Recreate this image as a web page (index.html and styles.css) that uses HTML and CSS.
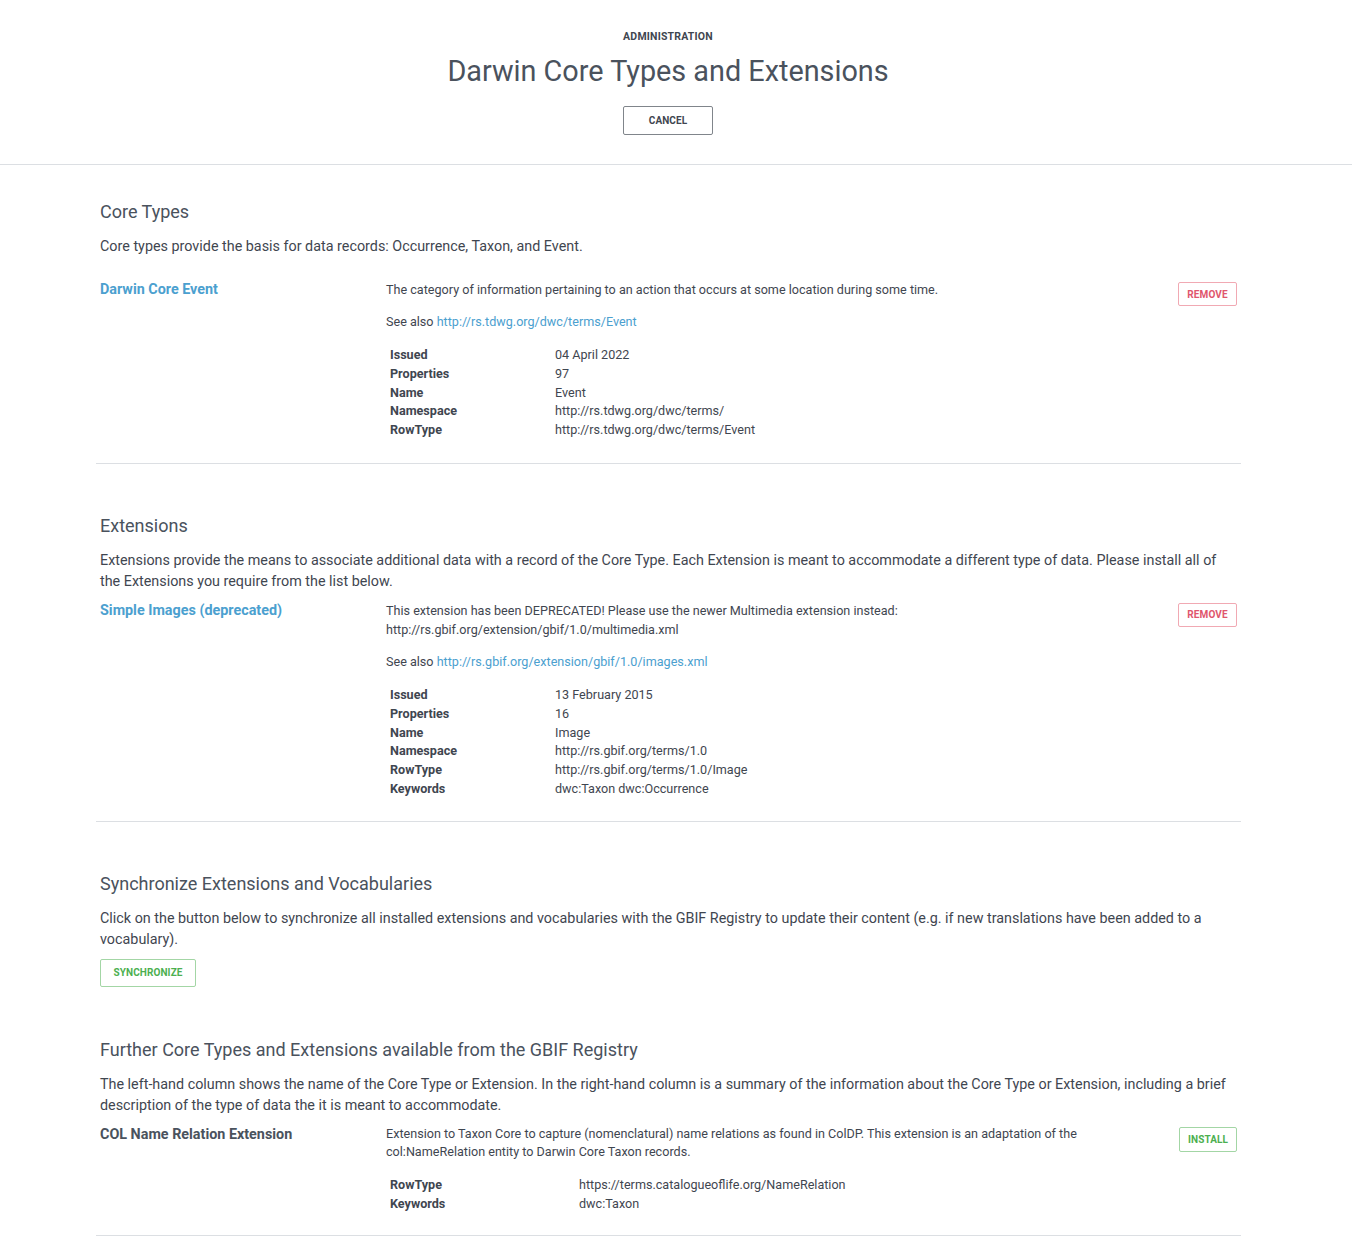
FILE: index.html
```html
<!DOCTYPE html>
<html lang="en">
<head>
<meta charset="utf-8">
<title>Darwin Core Types and Extensions</title>
<link rel="stylesheet" href="styles.css">
</head>
<body>
<header class="page-header">
  <div class="eyebrow">ADMINISTRATION</div>
  <h1 class="page-title">Darwin Core Types and Extensions</h1>
  <div class="header-actions"><button class="btn btn-grey">CANCEL</button></div>
</header>

<main class="container">
  <section class="section first">
    <h2 class="section-title">Core Types</h2>
    <p class="section-text">Core types provide the basis for data records: Occurrence, Taxon, and Event.</p>
    <div class="ext-row gap-lg">
      <div class="ext-name"><a href="#">Darwin Core Event</a></div>
      <div class="ext-body">
        <p class="ext-desc">The category of information pertaining to an action that occurs at some location during some time.</p>
        <p class="ext-see">See also <a href="#">http://rs.tdwg.org/dwc/terms/Event</a></p>
        <table class="ext-table">
          <tr><th>Issued</th><td>04 April 2022</td></tr>
          <tr><th>Properties</th><td>97</td></tr>
          <tr><th>Name</th><td>Event</td></tr>
          <tr><th>Namespace</th><td>http://rs.tdwg.org/dwc/terms/</td></tr>
          <tr><th>RowType</th><td>http://rs.tdwg.org/dwc/terms/Event</td></tr>
        </table>
      </div>
      <div class="ext-action"><button class="btn btn-red">REMOVE</button></div>
    </div>
  </section>

  <section class="section">
    <h2 class="section-title">Extensions</h2>
    <p class="section-text">Extensions provide the means to associate additional data with a record of the Core Type. Each Extension is meant to accommodate a different type of data. Please install all of the Extensions you require from the list below.</p>
    <div class="ext-row">
      <div class="ext-name"><a href="#">Simple Images (deprecated)</a></div>
      <div class="ext-body">
        <p class="ext-desc">This extension has been DEPRECATED! Please use the newer Multimedia extension instead: http://rs.gbif.org/extension/gbif/1.0/multimedia.xml</p>
        <p class="ext-see">See also <a href="#">http://rs.gbif.org/extension/gbif/1.0/images.xml</a></p>
        <table class="ext-table">
          <tr><th>Issued</th><td>13 February 2015</td></tr>
          <tr><th>Properties</th><td>16</td></tr>
          <tr><th>Name</th><td>Image</td></tr>
          <tr><th>Namespace</th><td>http://rs.gbif.org/terms/1.0</td></tr>
          <tr><th>RowType</th><td>http://rs.gbif.org/terms/1.0/Image</td></tr>
          <tr><th>Keywords</th><td>dwc:Taxon dwc:Occurrence</td></tr>
        </table>
      </div>
      <div class="ext-action"><button class="btn btn-red">REMOVE</button></div>
    </div>
  </section>

  <section class="section no-border">
    <h2 class="section-title">Synchronize Extensions and Vocabularies</h2>
    <p class="section-text">Click on the button below to synchronize all installed extensions and vocabularies with the GBIF Registry to update their content (e.g. if new translations have been added to a vocabulary).</p>
    <button class="btn btn-green btn-sync">SYNCHRONIZE</button>
  </section>

  <section class="section">
    <h2 class="section-title">Further Core Types and Extensions available from the GBIF Registry</h2>
    <p class="section-text">The left-hand column shows the name of the Core Type or Extension. In the right-hand column is a summary of the information about the Core Type or Extension, including a brief description of the type of data the it is meant to accommodate.</p>
    <div class="ext-row">
      <div class="ext-name plain">COL Name Relation Extension</div>
      <div class="ext-body">
        <p class="ext-desc tight">Extension to Taxon Core to capture (nomenclatural) name relations as found in ColDP. This extension is an adaptation of the col:NameRelation entity to Darwin Core Taxon records.</p>
        <table class="ext-table wide">
          <tr><th>RowType</th><td>https://terms.catalogueoflife.org/NameRelation</td></tr>
          <tr><th>Keywords</th><td>dwc:Taxon</td></tr>
        </table>
      </div>
      <div class="ext-action"><button class="btn btn-green">INSTALL</button></div>
    </div>
  </section>
</main>
</body>
</html>
```

FILE: styles.css
```css
* { box-sizing: border-box; }

body {
  margin: 0;
  font-family: Roboto, "Liberation Sans", Arial, sans-serif;
  color: #4a525d;
  background: #fff;
}

a { color: #4ba0cf; text-decoration: none; }

.page-header {
  text-align: center;
  padding-top: 31px;
  padding-bottom: 29px;
  padding-right: 16px;
  border-bottom: 1px solid #dcdfe3;
}

.eyebrow {
  font-size: 10.5px;
  font-weight: 700;
  line-height: 12px;
  letter-spacing: 0.2px;
  color: #3f4650;
}

.page-title {
  margin: 11px 0 0;
  font-size: 28.8px;
  font-weight: 400;
  line-height: 34px;
  color: #4a525d;
}

.header-actions {
  margin-top: 18px;
}

.btn {
  font-family: Roboto, "Liberation Sans", Arial, sans-serif;
  font-size: 10px;
  font-weight: 700;
  background: #fff;
  border-radius: 2px;
  cursor: pointer;
  padding: 0;
  letter-spacing: 0.1px;
}

.btn-grey {
  width: 90px;
  height: 29px;
  border: 1px solid #80858b;
  color: #3f4650;
}

.btn-red {
  width: 59px;
  height: 24px;
  border: 1px solid #f1a9b3;
  color: #e0566c;
}

.btn-green {
  width: 58px;
  height: 25px;
  border: 1px solid #a3d6a5;
  color: #4caf50;
}

.btn-sync {
  width: 96px;
  height: 28px;
  margin-top: 9px;
}

.container {
  width: 1145px;
  margin-left: 96px;
  padding-bottom: 6px;
}

.section {
  padding: 51px 4px 22px;
  border-bottom: 1px solid #dcdfe3;
}

.section.first { padding-top: 36px; padding-bottom: 23px; }

.section.no-border {
  border-bottom: none;
  padding-bottom: 1px;
}

.section-title {
  margin: 0;
  font-size: 18px;
  font-weight: 400;
  line-height: 22px;
  color: #4a525d;
}

.section-text {
  margin: 13px 0 0;
  font-size: 14.35px;
  line-height: 21px;
  color: #3f4650;
}

.ext-row {
  display: grid;
  grid-template-columns: 286px 763px 96px;
  margin: 9px -4px 0;
  align-items: start;
}

.ext-row.gap-lg { margin-top: 23px; }

.ext-row > div { padding: 0 4px; }

.ext-name {
  font-size: 14.35px;
  font-weight: 700;
  line-height: 20px;
}

.ext-name.plain { color: #4a525d; }

.ext-desc {
  margin: 0;
  font-size: 12.6px;
  line-height: 19px;
  color: #3f4650;
}

.ext-desc.tight { line-height: 18.5px; }

.ext-see {
  margin: 13px 0 0;
  font-size: 12.6px;
  line-height: 19px;
  color: #3f4650;
}

.ext-table {
  margin-top: 15px;
  border-collapse: collapse;
  font-size: 12.6px;
  color: #3f4650;
}

.ext-desc.tight + .ext-table { margin-top: 14px; }

.ext-table th {
  text-align: left;
  font-weight: 700;
  width: 169px;
  padding: 0 0 0 4px;
  line-height: 18.8px;
}

.ext-table.wide th { width: 193px; }

.ext-table td {
  padding: 0;
  line-height: 18.8px;
}

.ext-action {
  display: flex;
  justify-content: flex-end;
  padding-top: 2px !important;
}
```
